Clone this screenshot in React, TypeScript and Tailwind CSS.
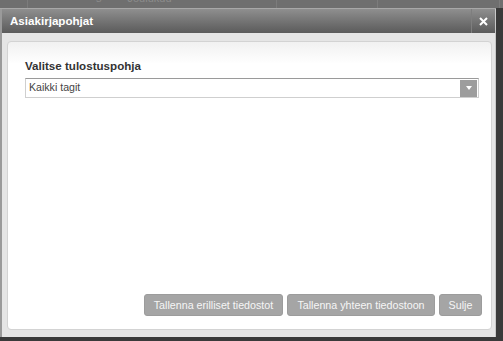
import React from "react";

export default function App() {
  return (
    <div
      className="w-[503px] h-[341px] overflow-hidden bg-[#3a3a3a] flex flex-col"
      style={{ fontFamily: '"Liberation Sans", Arial, sans-serif' }}
    >
      {/* background page strip */}
      <div className="h-[8px] bg-[#6f6f6f] flex overflow-hidden text-[11px] text-[#8c8c8c] leading-none">
        <div className="w-[28px] border-r border-[#7c7c7c]" />
        <div className="w-[249px] border-r border-[#7c7c7c] flex">
          <span className="ml-[68px] -mt-[7px]">s</span>
          <span className="ml-[26px] -mt-[7px]">Joulukuu</span>
        </div>
        <div className="w-[101px] border-r border-[#7c7c7c]" />
        <div className="w-[122px] border-r border-[#7c7c7c]" />
      </div>
      <div className="h-[1px] bg-[#a8a8a8] w-[496px]" />
      {/* window */}
      <div className="w-[496px] h-[328px] flex flex-col border-l-[2px] border-r border-l-[#9a9a9a] border-r-[#c8c8c8] bg-[#e5e5e5]">
        <div className="h-[24px] flex items-stretch bg-gradient-to-b from-[#8f8f8f] to-[#5b5b5b]">
          <div className="flex-1 flex items-center pl-[8px] text-white font-bold text-[11.6px]">
            Asiakirjapohjat
          </div>
          <div className="w-[24px] border-l border-[#7e7e7e] flex items-center justify-center">
            <svg width="9" height="9" viewBox="0 0 9 9">
              <path d="M1 1L8 8M8 1L1 8" stroke="#ffffff" strokeWidth="2" />
            </svg>
          </div>
        </div>
        <div className="flex-1 pt-[8px] pl-[5px] pr-[3px] pb-[7px] flex">
          <div className="flex-1 flex flex-col rounded-[4px] border border-[#d3d3d3] bg-[linear-gradient(to_bottom,#f1f1f1,#ffffff_22px)]">
            <div className="pl-[17px] pt-[17px]">
              <div className="text-[11.6px] font-bold text-[#333333] leading-[14px]">
                Valitse tulostuspohja
              </div>
              <div className="mt-[5px] w-[454px] h-[20px] border border-[#cfcfcf] border-t-[#9a9a9a] bg-white flex items-center">
                <span className="flex-1 pl-[3px] text-[10.6px] text-[#444444]">Kaikki tagit</span>
                <div className="w-[17px] h-[17px] mr-[1px] bg-[#9d9d9d] flex items-center justify-center">
                  <svg width="6" height="4" viewBox="0 0 6 4">
                    <path d="M0 0L6 0L3 4Z" fill="#ffffff" />
                  </svg>
                </div>
              </div>
            </div>
            <div className="flex-1" />
            <div className="flex justify-end gap-[4px] pr-[9px] pb-[13px]">
              <button className="w-[139px] h-[22px] rounded-[3px] bg-[#a5a5a5] border border-[#9c9c9c] text-[#f6f6f6] text-[10.7px]">
                Tallenna erilliset tiedostot
              </button>
              <button className="w-[148px] h-[22px] rounded-[3px] bg-[#a5a5a5] border border-[#9c9c9c] text-[#f6f6f6] text-[10.7px]">
                Tallenna yhteen tiedostoon
              </button>
              <button className="w-[43px] h-[22px] rounded-[3px] bg-[#a5a5a5] border border-[#9c9c9c] text-[#f6f6f6] text-[10.7px]">
                Sulje
              </button>
            </div>
          </div>
        </div>
      </div>
    </div>
  );
}
